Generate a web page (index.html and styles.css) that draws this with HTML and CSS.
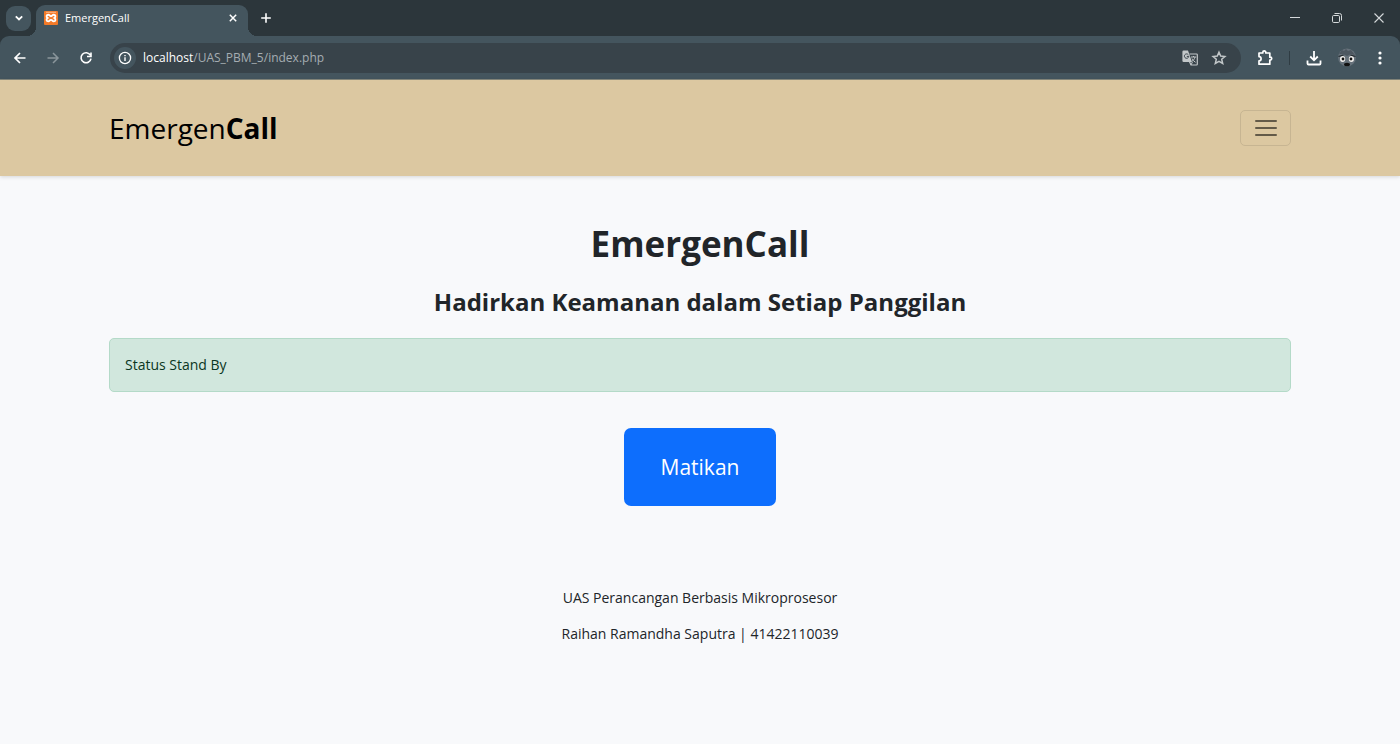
FILE: index.html
```html
<!DOCTYPE html>
<html lang="id">
<head>
<meta charset="utf-8">
<meta name="viewport" content="width=device-width, initial-scale=1">
<title>EmergenCall</title>
<link rel="stylesheet" href="styles.css">
</head>
<body>
<div class="browser">
  <div class="tab-strip">
    <button class="tab-search" aria-label="Search tabs"><svg width="10" height="10" viewBox="0 0 10 10"><path d="M1.800 3.300l3.200 3.200 3.200-3.200" stroke-width="1.800"/></svg></button>
    <div class="tab">
      <svg class="favicon" width="14" height="14" viewBox="0 0 14 14"><rect width="14" height="14" rx="1" fill="#f47a28" stroke="none"/><path d="M2 1.300h10" stroke="#fbb98a" stroke-width="1"/><path d="M4.300 3.700c-2 0-2.300 2.400-.7 3.300-1.600.9-1.300 3.400.7 3.400 1.400 0 1.200-1.500 2.700-1.500s1.300 1.500 2.700 1.500c2 0 2.300-2.500.7-3.400 1.600-.9 1.300-3.300-.7-3.300-1.400 0-1.200 1.500-2.700 1.500s-1.300-1.500-2.700-1.500z" stroke="#fff" stroke-width="1.900"/></svg>
      <span class="tab-title">EmergenCall</span>
      <button class="icon-button" aria-label="Close tab"><svg width="10" height="10" viewBox="0 0 10 10"><path d="M1.800 1.800l6.400 6.400M8.200 1.800L1.800 8.200" stroke-width="1.500"/></svg></button>
    </div>
    <button class="icon-button new-tab" aria-label="New tab"><svg width="12" height="12" viewBox="0 0 12 12"><path d="M6 1.200v9.600M1.200 6h9.600" stroke-width="1.600"/></svg></button>
    <div class="window-controls">
      <button class="icon-button" aria-label="Minimize"><svg width="12" height="12" viewBox="0 0 12 12"><path d="M1 5.500h10" stroke-width="1"/></svg></button>
      <button class="icon-button" aria-label="Restore"><svg width="12" height="12" viewBox="0 0 12 12"><rect x="1.500" y="3.500" width="7" height="7" rx="1.200"/><path d="M3.500 1.500h5a2 2 0 0 1 2 2v5"/></svg></button>
      <button class="icon-button" aria-label="Close"><svg width="12" height="12" viewBox="0 0 12 12"><path d="M1.500 1.500l9 9M10.500 1.500l-9 9" stroke-width="1.100"/></svg></button>
    </div>
  </div>
  <div class="toolbar">
    <div class="navigation">
      <button class="icon-button" aria-label="Back"><svg width="14" height="14" viewBox="0 0 14 14"><path d="M12.500 7h-10M7 2L2 7l5 5" stroke-width="1.700"/></svg></button>
      <button class="icon-button muted" aria-label="Forward"><svg width="14" height="14" viewBox="0 0 14 14"><path d="M1.500 7h10M7 2l5 5-5 5" stroke-width="1.500"/></svg></button>
      <button class="icon-button" aria-label="Reload"><svg width="14" height="14" viewBox="0 0 14 14"><path d="M11.400 4.200A5 5 0 1 0 12 7.600M12 1.500v4H8" stroke-width="1.600"/></svg></button>
    </div>
    <div class="omnibox">
      <button class="site-info" aria-label="Site information"><svg width="14" height="14" viewBox="0 0 14 14"><circle cx="7" cy="7" r="5.600" stroke-width="1.300"/><path d="M7 6.300v3.600M7 3.900v1.300" stroke-width="1.400"/></svg></button>
      <div class="address"><span class="host">localhost</span>/UAS_PBM_5/index.php</div>
      <button class="icon-button page-action" aria-label="Translate"><svg width="16" height="16" viewBox="0 0 16 16"><path d="M7.500 4h7a.8.8 0 0 1 .8.800v9.400a.8.8 0 0 1-.8.800H9l-1.600-3.500" stroke-width="1.200"/><path d="M1.600.6H6l4 11.400H1.600A1.200 1.200 0 0 1 .4 10.800v-9A1.200 1.200 0 0 1 1.600.6z" fill="currentColor" stroke="none"/><path d="M6.300 4.700a2.200 2.200 0 1 0 .5 1.700h-2" stroke="#38434a" stroke-width="1"/><path d="M9 7h5.200M11.500 6v1M13 7c-.5 2.200-1.800 3.500-3 4.300M10 8.500c.8 1.600 2 2.900 3.500 3.800M9 15l1.400-3" stroke-width="1"/></svg></button>
      <button class="icon-button page-action" aria-label="Bookmark this tab"><svg width="16" height="16" viewBox="0 0 16 16"><path d="M8 2.200l1.700 3.900 4.200.4-3.200 2.800 1 4.200L8 11.300l-3.700 2.200 1-4.200-3.200-2.800 4.200-.4z" stroke-width="1.500"/></svg></button>
    </div>
    <div class="browser-actions">
      <button class="icon-button" aria-label="Extensions"><svg width="18" height="18" viewBox="0 0 18 18"><path d="M3 4h3.800V3.400a1.500 1.500 0 0 1 3 0V4h4v4.200h.5a1.400 1.400 0 0 1 0 2.800h-.5v4.200H3v-3.400a2.100 2.100 0 0 0 0-4.200z" stroke-width="1.700" stroke-linejoin="round"/></svg></button>
      <span class="divider"></span>
      <button class="icon-button" aria-label="Downloads"><svg width="18" height="18" viewBox="0 0 18 18"><path d="M9 2v9M5.200 7.500L9 11.300l3.800-3.800M2.500 11.500v3a1 1 0 0 0 1 1h11a1 1 0 0 0 1-1v-3" stroke-width="1.800"/></svg></button>
      <button class="icon-button" aria-label="Profile"><svg width="20" height="20" viewBox="0 0 20 20"><circle cx="10" cy="9.500" r="9" fill="#66717a" stroke="none"/><path d="M2 6l3-4 2 1 2-2 2 2 3-1 4 5-4-1-4 2-4-2z" fill="#4d5760" stroke="none"/><ellipse cx="5.600" cy="11" rx="2.600" ry="3" fill="#f3f1ee" stroke="none"/><ellipse cx="14.400" cy="11" rx="2.600" ry="3" fill="#f3f1ee" stroke="none"/><circle cx="6" cy="11" r="1.400" fill="#111" stroke="none"/><circle cx="14" cy="11" r="1.400" fill="#111" stroke="none"/><path d="M1.500 8.500l5-1.500M18.500 8.500l-5-1.500" stroke="#20272c" stroke-width="1.300"/><ellipse cx="10" cy="16.500" rx="3" ry="1.800" fill="#111" stroke="none"/></svg></button>
      <button class="icon-button" aria-label="Menu"><svg width="18" height="18" viewBox="0 0 18 18"><g fill="currentColor" stroke="none"><circle cx="9" cy="4" r="1.600"/><circle cx="9" cy="9" r="1.600"/><circle cx="9" cy="14" r="1.600"/></g></svg></button>
    </div>
  </div>
</div>
<header class="site-header">
  <nav class="container navbar">
    <a class="brand" href="#">Emergen<strong>Call</strong></a>
    <button class="menu-toggle" aria-label="Toggle navigation"><svg width="28" height="28" viewBox="0 0 28 28"><path d="M4 7h20M4 14h20M4 21h20" stroke-width="2" stroke-linecap="round"/></svg></button>
  </nav>
</header>
<main class="container content">
  <h1>EmergenCall</h1>
  <h2>Hadirkan Keamanan dalam Setiap Panggilan</h2>
  <div class="status" role="status">Status Stand By</div>
  <button class="primary-button">Matikan</button>
</main>
<footer class="container site-footer">
  <p>UAS Perancangan Berbasis Mikroprosesor</p>
  <p>Raihan Ramandha Saputra | 41422110039</p>
</footer>
</body>
</html>
```
FILE: styles.css
```css
* { box-sizing: border-box; }
body {
  margin: 0;
  background: #f8f9fb;
  color: #212529;
  font: 14px/22px "Open Sans", "Noto Sans", sans-serif;
}
button { font: inherit; color: inherit; margin: 0; padding: 0; border: 0; background: none; }
svg { display: block; flex: none; fill: none; stroke: currentColor; }

.browser { background: #2c363b; color: #fff; }
.tab-strip { display: flex; align-items: center; height: 36px; padding-left: 6px; }
.tab-search {
  display: grid; place-items: center;
  width: 25px; height: 25px; border-radius: 9px;
  background: #44555e;
}
.tab {
  position: relative;
  display: flex; align-items: center; gap: 7px;
  align-self: flex-end;
  width: 212px; height: 31px; margin-left: 5px; padding: 0 5px 5px 8px;
  border-radius: 9px 9px 0 0;
  background: #44555e;
}
.tab::before, .tab::after {
  content: "";
  position: absolute; bottom: 0;
  width: 9px; height: 9px;
}
.tab::before { right: 100%; background: radial-gradient(circle at 0 0, transparent 9px, #44555e 9px); }
.tab::after { left: 100%; background: radial-gradient(circle at 100% 0, transparent 9px, #44555e 9px); }
.tab-title { flex: 1; font-size: 11px; line-height: 16px; }
.icon-button { display: grid; place-items: center; width: 20px; height: 20px; }
.new-tab { margin-left: 8px; }
.window-controls { display: flex; gap: 22px; margin-left: auto; padding-right: 11px; color: #d5d9db; }

.toolbar {
  display: flex; align-items: center;
  height: 44px; padding: 0 10px;
  border-bottom: 1px solid #86887c;
  border-radius: 9px 9px 0 0;
  background: #44555e;
}
.navigation { display: flex; gap: 13px; }
.muted { color: #8a959b; }
.omnibox {
  display: flex; align-items: center; flex: 1; gap: 9px;
  height: 30px; margin-left: 14px; padding: 0 12px 0 4px;
  border-radius: 15px;
  background: #38434a;
}
.site-info { display: grid; place-items: center; width: 22px; height: 22px; border-radius: 50%; background: #44555e; }
.address { flex: 1; margin-left: -2px; color: #a5adb2; font-size: 12px; line-height: 20px; }
.host { color: #fff; }
.page-action { color: #c2c7c9; }
.browser-actions { display: flex; align-items: center; gap: 13px; margin-left: 14px; }
.divider { width: 1px; height: 14px; background: #2f3c43; margin: 0 1px; }

.container { width: 100%; max-width: 1182px; margin: 0 auto; }
.site-header { background: #dcc8a1; box-shadow: 0 1px 4px rgba(0, 0, 0, .14); }
.navbar { display: flex; align-items: center; justify-content: space-between; padding: 30px 0; }
.brand { color: #000; font-size: 28px; line-height: 36px; text-decoration: none; }
.brand strong { font-weight: 700; }
.menu-toggle {
  display: grid; place-items: center;
  width: 51px; height: 36px;
  border: 1px solid #c7b592; border-radius: 5px;
  color: #635a48;
}

.content { display: flex; flex-direction: column; align-items: center; padding-top: 46px; }
h1, h2 { margin: 0; font-weight: 700; text-align: center; }
h1 { font-size: 35px; line-height: 44px; }
h2 { margin-top: 18px; font-size: 24px; line-height: 36px; }
.status {
  width: 100%; margin-top: 18px; padding: 15px;
  border: 1px solid #b4dac8; border-radius: 5px;
  background: #d1e7dd; color: #0a3622;
}
.primary-button {
  margin-top: 36px; padding: 22px 37px;
  border-radius: 7px;
  background: #0d6efd; color: #fff;
  font-size: 21px; line-height: 34px;
}
.site-footer { margin-top: 81px; text-align: center; }
.site-footer p { margin: 0 0 14px; }
```
